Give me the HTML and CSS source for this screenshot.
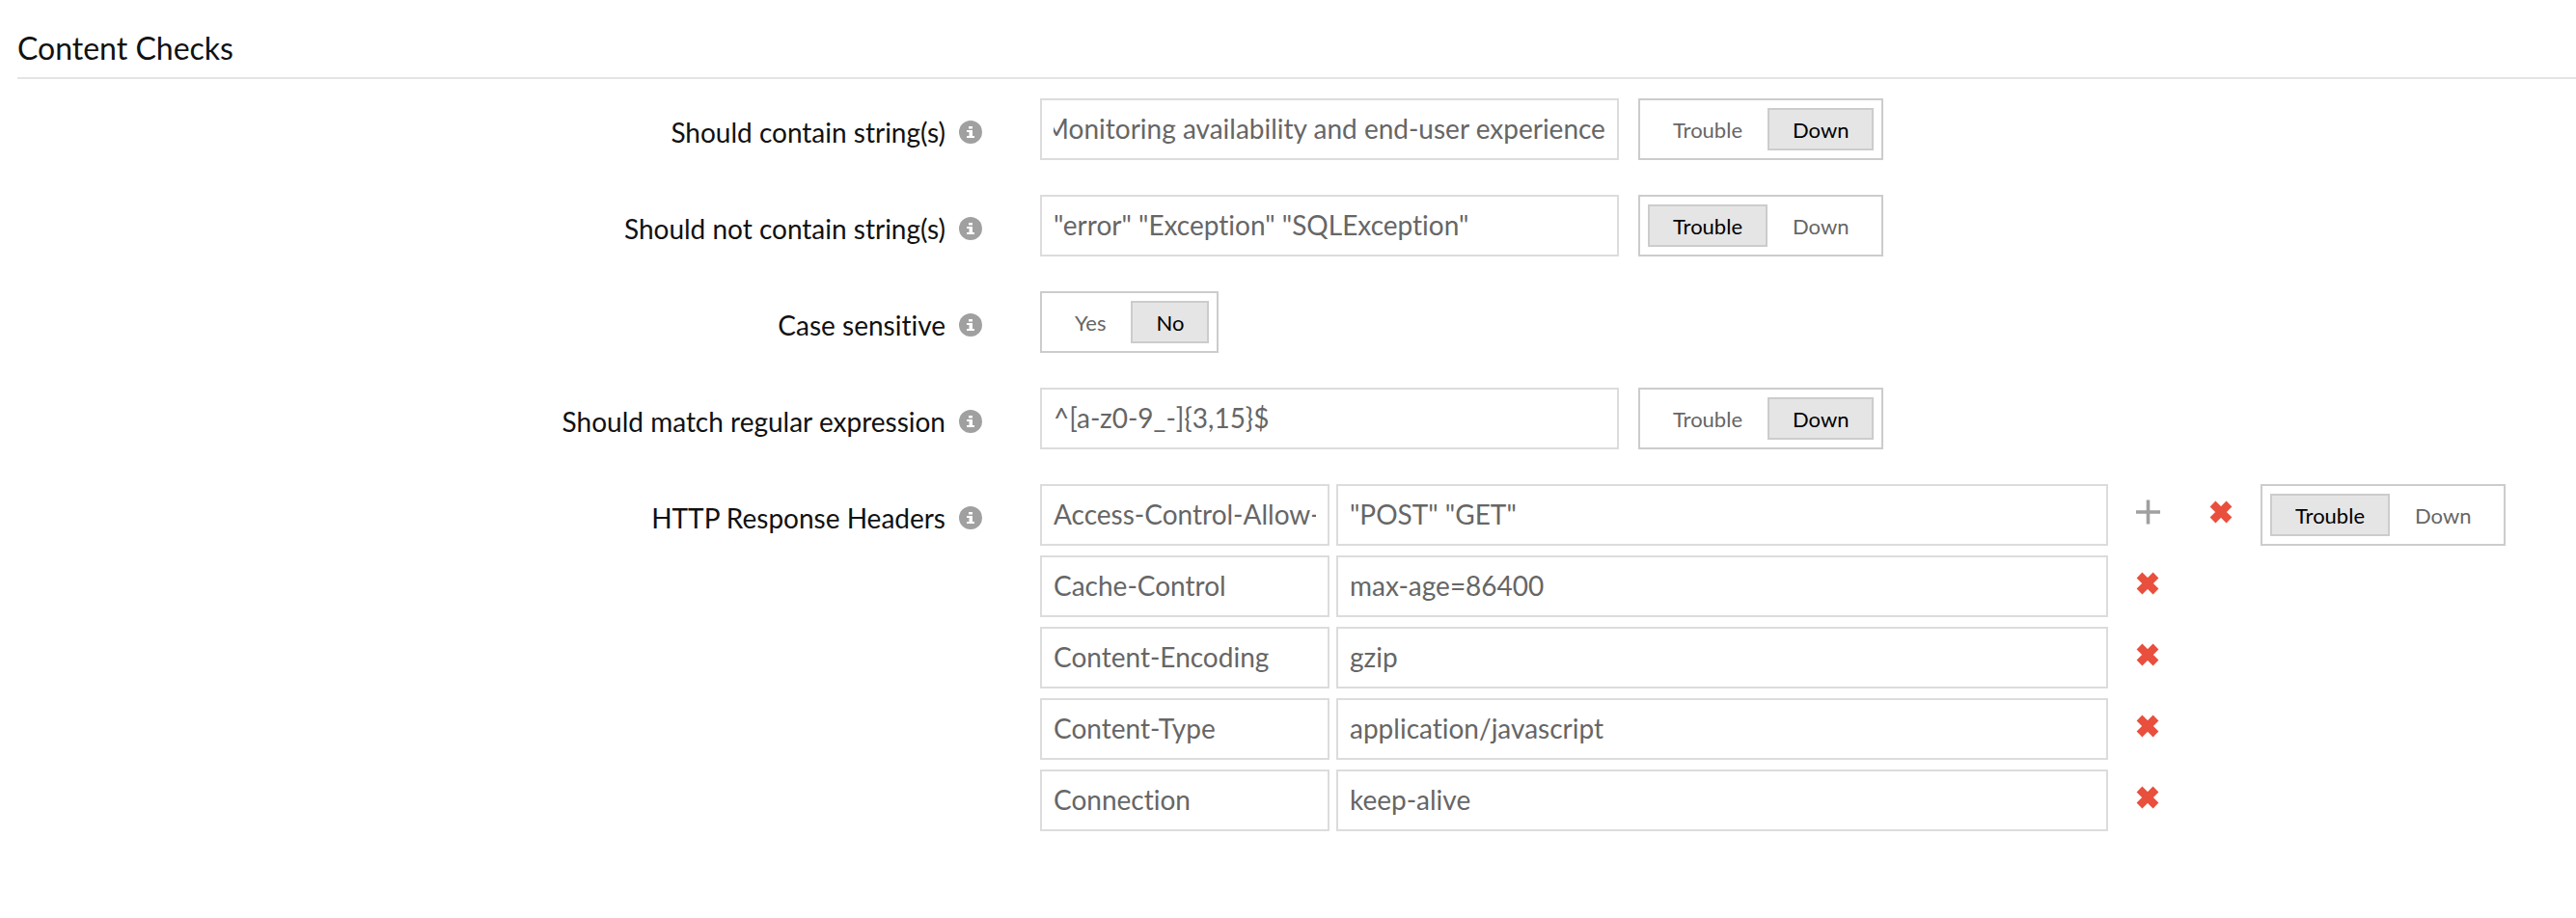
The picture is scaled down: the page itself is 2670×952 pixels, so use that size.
FILE: index.html
```html
<!DOCTYPE html>
<html lang="en">
<head>
<meta charset="utf-8">
<title>Content Checks</title>
<meta name="viewport" content="width=device-width, initial-scale=1">
<link rel="stylesheet" href="styles.css">
</head>
<body>
<svg class="sprite" aria-hidden="true">
  <symbol id="info" viewBox="0 0 24 24"><circle cx="12" cy="12" r="12" fill="#a0a0a0"/><path fill="#fff" d="M10 6h4v2.5h-4zM8 10h6v6h2v2H8v-2h2.5v-4H8z"/></symbol>
  <symbol id="remove" viewBox="0 0 26 26"><path d="M4.5 4.5l17 17M21.5 4.5l-17 17" stroke="#e94f3d" stroke-width="8.2"/></symbol>
  <symbol id="add" viewBox="0 0 26 26"><path d="M13.5 .5v25M1 13h25" stroke="#a0a0a0" stroke-width="3.6"/></symbol>
</svg>
<main>
  <h1 class="title">Content Checks</h1>
  <form class="form">
    <div class="row">
      <div class="caption"><label for="contain">Should contain string(s)</label><button type="button" class="icon info" aria-label="About should contain"><svg><use href="#info"/></svg></button></div>
      <div class="line">
        <input class="field" id="contain" type="text" value="Monitoring availability and end-user experience">
        <div class="toggle" role="group" aria-label="Contain severity"><button type="button" class="option" aria-pressed="false">Trouble</button><button type="button" class="option" aria-pressed="true">Down</button></div>
      </div>
    </div>
    <div class="row">
      <div class="caption"><label for="exclude">Should not contain string(s)</label><button type="button" class="icon info" aria-label="About should not contain"><svg><use href="#info"/></svg></button></div>
      <div class="line">
        <input class="field" id="exclude" type="text" value='"error" "Exception" "SQLException"'>
        <div class="toggle" role="group" aria-label="Not contain severity"><button type="button" class="option" aria-pressed="true">Trouble</button><button type="button" class="option" aria-pressed="false">Down</button></div>
      </div>
    </div>
    <div class="row">
      <div class="caption"><span id="case">Case sensitive</span><button type="button" class="icon info" aria-label="About case sensitive"><svg><use href="#info"/></svg></button></div>
      <div class="line">
        <div class="toggle" role="group" aria-labelledby="case"><button type="button" class="option" aria-pressed="false">Yes</button><button type="button" class="option" aria-pressed="true">No</button></div>
      </div>
    </div>
    <div class="row">
      <div class="caption"><label for="regex">Should match regular expression</label><button type="button" class="icon info" aria-label="About regular expression"><svg><use href="#info"/></svg></button></div>
      <div class="line">
        <input class="field" id="regex" type="text" value="^[a-z0-9_-]{3,15}$">
        <div class="toggle" role="group" aria-label="Expression severity"><button type="button" class="option" aria-pressed="false">Trouble</button><button type="button" class="option" aria-pressed="true">Down</button></div>
      </div>
    </div>
    <div class="row">
      <div class="caption"><label for="header1">HTTP Response Headers</label><button type="button" class="icon info" aria-label="About response headers"><svg><use href="#info"/></svg></button></div>
      <div class="headers">
        <div class="header">
          <input class="field name" id="header1" type="text" value="Access-Control-Allow-">
          <input class="field value" type="text" aria-label="Header 1 value" value='"POST" "GET"'>
          <div class="actions"><button type="button" class="icon" aria-label="Add header"><svg><use href="#add"/></svg></button><button type="button" class="icon" aria-label="Remove header 1"><svg><use href="#remove"/></svg></button></div>
          <div class="toggle" role="group" aria-label="Header severity"><button type="button" class="option" aria-pressed="true">Trouble</button><button type="button" class="option" aria-pressed="false">Down</button></div>
        </div>
        <div class="header">
          <input class="field name" type="text" aria-label="Header 2 name" value="Cache-Control">
          <input class="field value" type="text" aria-label="Header 2 value" value="max-age=86400">
          <div class="actions"><button type="button" class="icon" aria-label="Remove header 2"><svg><use href="#remove"/></svg></button></div>
        </div>
        <div class="header">
          <input class="field name" type="text" aria-label="Header 3 name" value="Content-Encoding">
          <input class="field value" type="text" aria-label="Header 3 value" value="gzip">
          <div class="actions"><button type="button" class="icon" aria-label="Remove header 3"><svg><use href="#remove"/></svg></button></div>
        </div>
        <div class="header">
          <input class="field name" type="text" aria-label="Header 4 name" value="Content-Type">
          <input class="field value" type="text" aria-label="Header 4 value" value="application/javascript">
          <div class="actions"><button type="button" class="icon" aria-label="Remove header 4"><svg><use href="#remove"/></svg></button></div>
        </div>
        <div class="header">
          <input class="field name" type="text" aria-label="Header 5 name" value="Connection">
          <input class="field value" type="text" aria-label="Header 5 value" value="keep-alive">
          <div class="actions"><button type="button" class="icon" aria-label="Remove header 5"><svg><use href="#remove"/></svg></button></div>
        </div>
      </div>
    </div>
  </form>
</main>
<script src="script.js"></script>
</body>
</html>
```
FILE: styles.css
```css
* { box-sizing: border-box; }
body {
  margin: 0;
  background: #fff;
  color: #111;
  font-family: Lato, "Liberation Sans", sans-serif;
  font-size: 28px;
  font-variant-ligatures: none;
}
button, input { font: inherit; font-variant-ligatures: none; }
.sprite { position: absolute; width: 0; height: 0; }
.title {
  margin: 0 0 20px 18px;
  padding: 30px 0 10px;
  border-bottom: 2px solid #e4e4e4;
  font-size: 32px;
  font-weight: 400;
  line-height: 40px;
}
.form { display: flex; flex-direction: column; gap: 36px; }
.row { display: flex; gap: 10px; }
.caption {
  flex: 0 0 40%;
  display: flex;
  align-items: center;
  justify-content: flex-end;
  gap: 14px;
  height: 64px;
  padding: 6px 50px 0 0;
}
.line { display: flex; gap: 20px; }
.field {
  width: 600px;
  height: 64px;
  padding: 0 12px 2px;
  border: 2px solid #dcdcdc;
  border-radius: 0;
  background: #fff;
  color: #666;
}
.toggle {
  display: flex;
  height: 64px;
  padding: 8px;
  border: 2px solid #ccc;
}
.option {
  padding: 0 24px;
  border: 2px solid transparent;
  background: none;
  color: #666;
  font-size: 22px;
}
.option[aria-pressed="true"] {
  border-color: #ccc;
  background: #e5e5e5;
  color: #000;
}
.headers { display: flex; flex-direction: column; gap: 10px; }
.header { display: flex; }
.name { width: 300px; margin-right: 7px; }
.value { width: 800px; }
.actions {
  display: flex;
  align-items: center;
  gap: 50px;
  padding: 0 28px 6px;
}
.icon {
  width: 26px;
  height: 26px;
  padding: 0;
  border: 0;
  background: none;
}
.info { width: 24px; height: 24px; }
.icon svg { display: block; width: 100%; height: 100%; }
```
FILE: script.js
```js
// Keep the end of a long value in view.
var contain = document.getElementById("contain");
contain.scrollLeft = contain.scrollWidth;

document.querySelectorAll(".toggle").forEach(function (toggle) {
  toggle.addEventListener("click", function (event) {
    var chosen = event.target.closest(".option");
    if (!chosen) return;
    toggle.querySelectorAll(".option").forEach(function (option) {
      option.setAttribute("aria-pressed", String(option === chosen));
    });
  });
});
```
